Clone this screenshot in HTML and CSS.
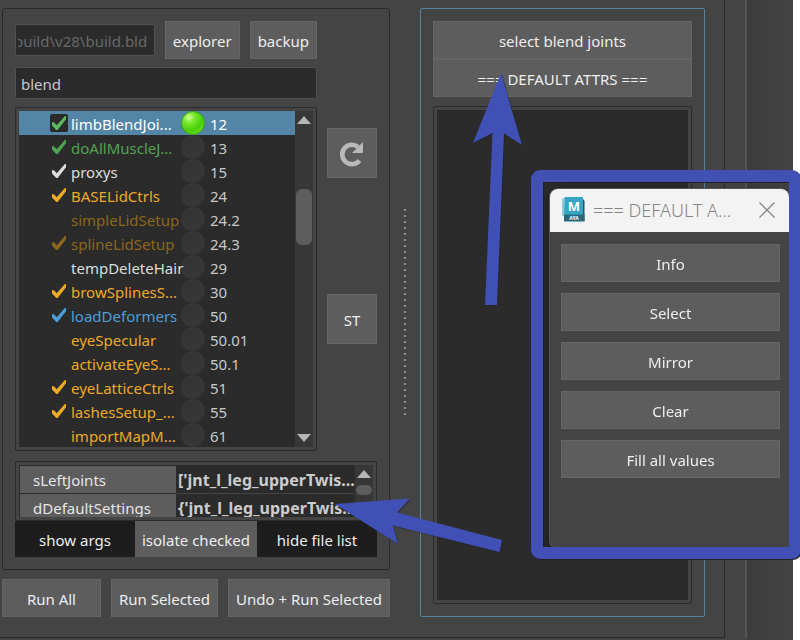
FILE: index.html
```html
<!DOCTYPE html>
<html lang="en">
<head>
<meta charset="utf-8">
<title>Build tool</title>
<link rel="stylesheet" href="styles.css">
</head>
<body>
<div class="app">
  <main class="workspace">
    <div class="left">
      <section class="panel">
        <div class="top">
          <div class="files">
            <div class="path-row">
              <input class="field path" type="text" value="build\v28\build.bld" aria-label="Build file" disabled>
              <button class="btn">explorer</button>
              <button class="btn">backup</button>
            </div>
            <input class="field search" type="text" value="blend" aria-label="Filter functions">
            <div class="frame tree">
              <table class="functions">
                <tbody>
                  <tr class="selected"><td class="tick green"><input type="checkbox" id="f1" checked></td><td class="name"><label for="f1">limbBlendJoi...</label></td><td class="status"><span class="lamp on"></span></td><td class="order">12</td></tr>
                  <tr><td class="tick green"><input type="checkbox" id="f2" checked></td><td class="name green"><label for="f2">doAllMuscleJ...</label></td><td class="status"><span class="lamp"></span></td><td class="order">13</td></tr>
                  <tr><td class="tick white"><input type="checkbox" id="f3" checked></td><td class="name white"><label for="f3">proxys</label></td><td class="status"><span class="lamp"></span></td><td class="order">15</td></tr>
                  <tr><td class="tick amber"><input type="checkbox" id="f4" checked></td><td class="name amber"><label for="f4">BASELidCtrls</label></td><td class="status"><span class="lamp"></span></td><td class="order">24</td></tr>
                  <tr><td class="tick brown"><input type="checkbox" id="f5"></td><td class="name brown"><label for="f5">simpleLidSetup</label></td><td class="status"><span class="lamp"></span></td><td class="order">24.2</td></tr>
                  <tr><td class="tick brown"><input type="checkbox" id="f6" checked></td><td class="name brown"><label for="f6">splineLidSetup</label></td><td class="status"><span class="lamp"></span></td><td class="order">24.3</td></tr>
                  <tr><td class="tick white"><input type="checkbox" id="f7"></td><td class="name white"><label for="f7">tempDeleteHair</label></td><td class="status"><span class="lamp"></span></td><td class="order">29</td></tr>
                  <tr><td class="tick amber"><input type="checkbox" id="f8" checked></td><td class="name amber"><label for="f8">browSplinesS...</label></td><td class="status"><span class="lamp"></span></td><td class="order">30</td></tr>
                  <tr><td class="tick blue"><input type="checkbox" id="f9" checked></td><td class="name blue"><label for="f9">loadDeformers</label></td><td class="status"><span class="lamp"></span></td><td class="order">50</td></tr>
                  <tr><td class="tick amber"><input type="checkbox" id="f10"></td><td class="name amber"><label for="f10">eyeSpecular</label></td><td class="status"><span class="lamp"></span></td><td class="order">50.01</td></tr>
                  <tr><td class="tick amber"><input type="checkbox" id="f11"></td><td class="name amber"><label for="f11">activateEyeS...</label></td><td class="status"><span class="lamp"></span></td><td class="order">50.1</td></tr>
                  <tr><td class="tick amber"><input type="checkbox" id="f12" checked></td><td class="name amber"><label for="f12">eyeLatticeCtrls</label></td><td class="status"><span class="lamp"></span></td><td class="order">51</td></tr>
                  <tr><td class="tick amber"><input type="checkbox" id="f13" checked></td><td class="name amber"><label for="f13">lashesSetup_...</label></td><td class="status"><span class="lamp"></span></td><td class="order">55</td></tr>
                  <tr><td class="tick amber"><input type="checkbox" id="f14"></td><td class="name amber"><label for="f14">importMapM...</label></td><td class="status"><span class="lamp"></span></td><td class="order">61</td></tr>
                </tbody>
              </table>
              <div class="scrollbar">
                <svg class="arrow" viewBox="0 0 14 8"><path d="M7 0 14 8H0z"/></svg>
                <span class="thumb"></span>
                <svg class="arrow end" viewBox="0 0 14 8"><path d="M0 0H14L7 8z"/></svg>
              </div>
            </div>
          </div>
          <div class="tools">
            <button class="btn square" aria-label="Reload">
              <svg viewBox="0 0 26 26" width="26" height="26"><path d="M20.5 19.5A9.7 9.7 0 1 1 19.2 6" fill="none" stroke="#b9b9b9" stroke-width="4.6"/><path d="M24 1V12H13z" fill="#b9b9b9"/></svg>
            </button>
            <button class="btn square">ST</button>
          </div>
        </div>
        <div class="frame args">
          <table class="arg-table">
            <tbody>
              <tr><th scope="row">sLeftJoints</th><td>['jnt_l_leg_upperTwis...</td></tr>
              <tr><th scope="row">dDefaultSettings</th><td>{'jnt_l_leg_upperTwis...</td></tr>
            </tbody>
          </table>
          <div class="scrollbar short">
            <svg class="arrow" viewBox="0 0 14 8"><path d="M7 0 14 8H0z"/></svg>
            <span class="thumb"></span>
          </div>
        </div>
        <div class="toggles">
          <button class="toggle pressed">show args</button>
          <button class="toggle">isolate checked</button>
          <button class="toggle pressed">hide file list</button>
        </div>
      </section>
      <div class="run-row">
        <button class="btn">Run All</button>
        <button class="btn">Run Selected</button>
        <button class="btn">Undo + Run Selected</button>
      </div>
    </div>
    <div class="splitter"><span class="grip"></span></div>
    <section class="attrs">
      <div class="stack">
        <button class="btn">select blend joints</button>
        <button class="btn">=== DEFAULT ATTRS ===</button>
      </div>
      <div class="frame list"><div class="well"></div></div>
    </section>
  </main>
  <div class="dock"></div>
  <div class="edge"></div>

  <div class="highlight">
    <div class="dialog" role="dialog" aria-labelledby="dialog-title">
      <header class="titlebar">
        <svg class="logo" viewBox="0 0 23 25" width="23" height="25">
          <path d="M0 2 3 0V18L0 19.500z" fill="#8bcbdc"/>
          <path d="M3 0H21V18H2z" fill="#38a5c4"/>
          <path d="M21 2 22.500 4V24H21z" fill="#1c5666"/>
          <path d="M2 17.500H22.500V24.500H2z" fill="#27687c"/>
          <text x="12" y="14" class="logo-m">M</text>
          <text x="12" y="23" class="logo-s">AYA</text>
        </svg>
        <h1 id="dialog-title">=== DEFAULT A...</h1>
        <button class="close" aria-label="Close"><svg viewBox="0 0 16 16" width="16" height="16"><path d="M.5.5l15 15M15.500.5l-15 15" fill="none" stroke="#858585" stroke-width="1.300"/></svg></button>
      </header>
      <div class="choices">
        <button class="btn">Info</button>
        <button class="btn">Select</button>
        <button class="btn">Mirror</button>
        <button class="btn">Clear</button>
        <button class="btn">Fill all values</button>
      </div>
    </div>
  </div>
  <svg class="pointers" viewBox="0 0 800 640" width="800" height="640" aria-hidden="true">
    <path d="M501 73 522 145 504 133.500 497 305H485L492.500 133 473 143z"/>
    <path d="M335 504 410 498.500 397 512.500 502 540 499.500 552 393 525.500 398 544z"/>
  </svg>
</div>
</body>
</html>
```

FILE: styles.css
```css
* {
  box-sizing: border-box;
}

body {
  margin: 0;
  background: #444;
  color: #ddd;
  font: 15px/22px "Noto Sans", "Open Sans", sans-serif;
}

button,
input {
  font: inherit;
  color: inherit;
  margin: 0;
}

.app {
  position: relative;
  display: flex;
  min-height: 100vh;
  padding-bottom: 3px;
  overflow: hidden;
  background: #444;
}

.workspace {
  flex: 1;
  display: flex;
  min-width: 0;
  padding: 8px 19px 20px 2px;
  border-right: 1px solid #2b2b2b;
  border-bottom: 1px solid #2b2b2b;
}

.left {
  flex: 0 0 388px;
  min-width: 0;
  display: flex;
  flex-direction: column;
  gap: 9px;
}

.panel {
  padding: 12px;
  border: 1px solid #2b2b2b;
  border-radius: 3px;
}

.top {
  display: flex;
  gap: 10px;
}

.files {
  flex: 1;
  min-width: 0;
  display: flex;
  flex-direction: column;
  gap: 8px;
}

.path-row {
  display: flex;
  align-items: center;
  gap: 10px;
}

.btn {
  height: 38px;
  padding: 2px 7px 0;
  border: 1px solid #656565;
  background: #5d5d5d;
  color: #eee;
  white-space: nowrap;
}

.field {
  height: 32px;
  min-width: 0;
  padding: 2px 5px 0;
  border: 1px solid #505050;
  border-radius: 2px;
  background: #2b2b2b;
  color: #c8c8c8;
}

.path {
  flex: 1 1 0;
  width: 0;
  padding: 2px 2px 0;
  text-indent: -4px;
  color: #686868;
}

.frame {
  display: flex;
  padding: 3px;
  border: 1px solid #2b2b2b;
  border-radius: 2px;
}

.tree {
  height: 344px;
}

.functions,
.arg-table {
  flex: 1;
  min-width: 0;
  border-collapse: collapse;
  table-layout: fixed;
  background: #2b2b2b;
}

.functions {
  width: 100%;
}

.functions td {
  height: 24px;
  padding: 2px 0 0;
  white-space: nowrap;
  color: #c8c8c8;
}

.functions .selected td {
  background: #5285a6;
  color: #fff;
}

.functions .tick {
  width: 52px;
  padding: 0 0 0 31px;
}

.functions .name {
  width: 110px;
}

.functions .status {
  width: 29px;
  padding: 0;
}

.functions .green { color: #4fa34f; }
.functions .white { color: #ddd; }
.functions .amber { color: #edaa26; }
.functions .brown { color: #8c661c; }
.functions .blue { color: #4a9fd8; }

.functions .selected .tick {
  color: #5cb85c;
}

.tick input {
  appearance: none;
  display: block;
  width: 18px;
  height: 18px;
  border: 1px solid #292929;
  border-radius: 2px;
  background: #2b2b2b;
}

.tick input:checked::before {
  content: "";
  display: block;
  width: 14px;
  height: 14px;
  margin: 1px;
  background: currentColor;
  clip-path: polygon(0 45%, 14% 45%, 34% 66%, 92% 0, 100% 0, 100% 24%, 40% 100%, 30% 100%, 0 68%);
}

.lamp {
  display: block;
  width: 24px;
  height: 24px;
  border-radius: 50%;
  background: radial-gradient(circle at 40% 35%, #333, #373737 60%, #2e2e2e);
}

.lamp.on {
  border: 1px solid #38a010;
  background: radial-gradient(circle at 32% 25%, #d4ff9c 0, #79e82d 25%, #48cf08 60%, #8bea38);
}

.scrollbar {
  flex: 0 0 18px;
  display: flex;
  flex-direction: column;
  align-items: center;
  padding: 5px 0;
  background: #373737;
}

.arrow {
  width: 14px;
  height: 8px;
  flex: none;
  fill: #b5b5b5;
}

.arrow.end {
  margin-top: auto;
}

.thumb {
  width: 16px;
  height: 56px;
  margin-top: 65px;
  border-radius: 6px;
  background: #5d5d5d;
}

.tools {
  flex: 0 0 50px;
  display: flex;
  flex-direction: column;
  gap: 116px;
  padding-top: 107px;
}

.square {
  display: grid;
  place-items: center;
  height: 50px;
  padding: 2px 0 0;
}

.args {
  height: 60px;
  margin-top: 10px;
  overflow: hidden;
}

.arg-table {
  display: block;
  overflow: hidden;
}

.arg-table th,
.arg-table td {
  height: 28px;
  padding: 0;
  border: 1px solid #2b2b2b;
  white-space: nowrap;
}

.arg-table th {
  min-width: 157px;
  padding-left: 13px;
  background: #5d5d5d;
  font-weight: 400;
  text-align: left;
  color: #e6e6e6;
}

.arg-table td {
  width: 100%;
  padding-left: 1px;
  border-bottom-color: #444;
  font-size: 16px;
  font-weight: 700;
  color: #ccc;
}

.short .thumb {
  height: 10px;
  margin-top: 7px;
  flex: none;
}

.toggles {
  display: flex;
}

.toggle {
  flex: 0 0 auto;
  height: 36px;
  padding: 2px 7px 0;
  border: 0;
  background: #5d5d5d;
  color: #eee;
}

.toggle.pressed {
  flex: 1 1 0;
  padding: 2px 0 0;
  background: #1d1d1d;
}

.run-row {
  display: flex;
  gap: 10px;
}

.run-row .btn:first-child {
  flex: 1;
}

.splitter {
  flex: 0 0 30px;
  display: grid;
  place-items: center;
}

.grip {
  width: 2px;
  height: 208px;
  background: repeating-linear-gradient(#8c8c8c 0 2px, transparent 2px 6px);
}

.attrs {
  flex: 1;
  min-width: 0;
  display: flex;
  flex-direction: column;
  gap: 9px;
  padding: 12px;
  border: 1px solid #56839c;
  border-radius: 2px;
}

.stack {
  display: flex;
  flex-direction: column;
}

.list {
  flex: 1;
}

.well {
  flex: 1;
  background: #2b2b2b;
}

.dock {
  flex: 0 0 22px;
  border-right: 2px solid #545454;
}

.edge {
  flex: 0 0 53px;
  margin-bottom: -3px;
  border-right: 7px solid #fff;
  background: linear-gradient(90deg, #3c3c3c, #444);
}

.highlight {
  position: absolute;
  top: 170px;
  left: 531px;
  right: -1px;
  padding: 7px 0 0 7px;
  border: 12px solid #4050b5;
  border-radius: 9px;
  overflow: hidden;
  filter: drop-shadow(1px 1px 0 #222);
}

.dialog {
  min-height: 358px;
  border-radius: 8px 8px 0 6px;
  background: #444;
  box-shadow: 0 0 0 1px #555, 0 4px 12px #0006;
}

.titlebar {
  display: flex;
  align-items: center;
  height: 43px;
  padding: 0 14px 2px 12px;
  border-radius: 8px 8px 0 0;
  background: #f3f3f3;
}

.titlebar h1 {
  flex: 1;
  margin: 0 0 0 8px;
  font-size: 18px;
  font-weight: 300;
  line-height: 24px;
  white-space: nowrap;
  color: #858585;
}

.logo-m,
.logo-s {
  fill: #fff;
  font-weight: 700;
  text-anchor: middle;
}

.logo-m { font-size: 13px; }
.logo-s { font-size: 5px; }

.close {
  display: grid;
  padding: 0;
  border: 0;
  background: none;
}

.choices {
  display: flex;
  flex-direction: column;
  gap: 11px;
  padding: 12px 9px 0 11px;
}

.pointers {
  position: absolute;
  top: 0;
  left: 0;
  pointer-events: none;
  fill: #4050b5;
  filter: drop-shadow(1px 1px 0 #2228);
}
```
